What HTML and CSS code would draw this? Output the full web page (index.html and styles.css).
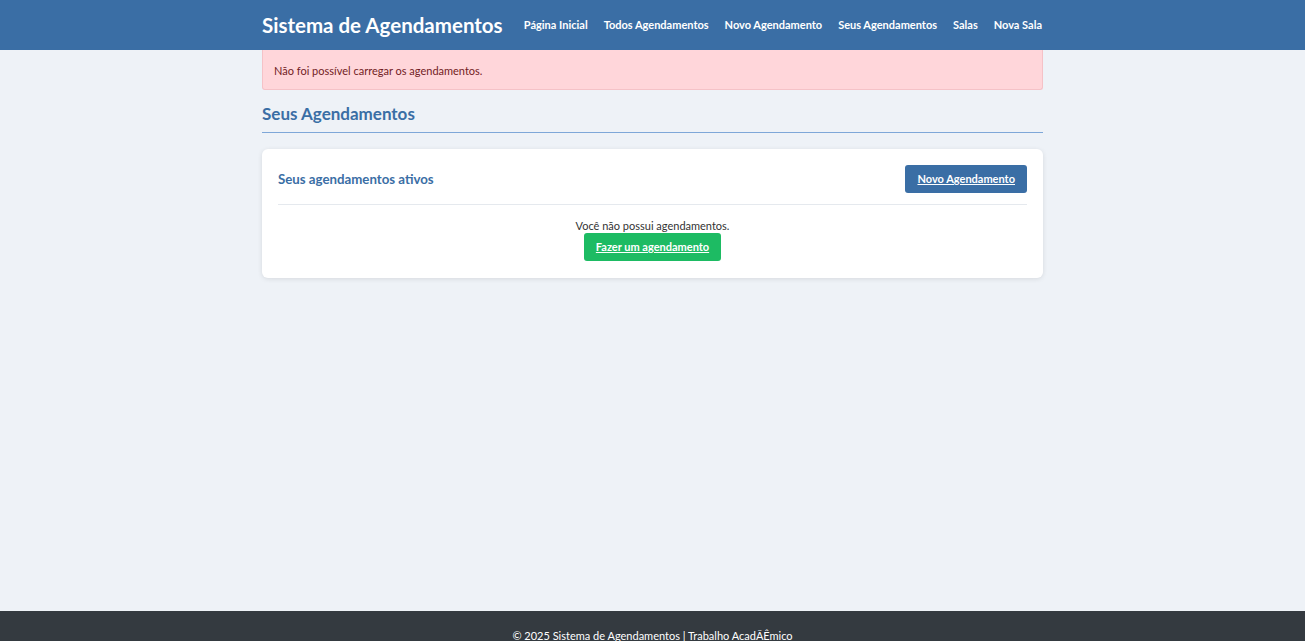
FILE: index.html
```html
<!DOCTYPE html>
<html lang="pt-BR">
<head>
<meta charset="utf-8">
<title>Seus Agendamentos</title>
<link rel="stylesheet" href="styles.css">
</head>
<body>
<header class="topbar">
  <div class="container topbar-inner">
    <a class="brand" href="#">Sistema de Agendamentos</a>
    <nav class="nav">
      <a href="#">Página Inicial</a>
      <a href="#">Todos Agendamentos</a>
      <a href="#">Novo Agendamento</a>
      <a href="#">Seus Agendamentos</a>
      <a href="#">Salas</a>
      <a href="#">Nova Sala</a>
    </nav>
  </div>
</header>
<main class="main">
  <div class="container">
    <div class="alert">Não foi possível carregar os agendamentos.</div>
    <h2 class="page-title">Seus Agendamentos</h2>
    <section class="card">
      <div class="card-header">
        <h3 class="card-title">Seus agendamentos ativos</h3>
        <a class="btn btn-primary" href="#">Novo Agendamento</a>
      </div>
      <div class="card-body">
        <p class="empty">Você não possui agendamentos.</p>
        <a class="btn btn-success" href="#">Fazer um agendamento</a>
      </div>
    </section>
  </div>
</main>
<footer class="footer">
  <p>© 2025 Sistema de Agendamentos | Trabalho AcadÃÊmico</p>
</footer>
</body>
</html>
```

FILE: styles.css
```css
* { box-sizing: border-box; }
html, body { margin: 0; padding: 0; }
body {
  font-family: Lato, "Open Sans", sans-serif;
  background: #eef2f7;
  color: #333;
  font-size: 12px;
}
.container {
  width: 781px;
  margin: 0 auto;
}
.topbar {
  background: #3a6ea5;
  height: 50px;
}
.topbar-inner {
  height: 50px;
  display: flex;
  align-items: center;
  justify-content: space-between;
  white-space: nowrap;
}
.brand {
  color: #fff;
  text-decoration: none;
  font-weight: 700;
  font-size: 20.5px;
}
.nav {
  display: flex;
  gap: 16px;
  padding-right: 1px;
  margin-top: -2px;
}
.nav a {
  color: #fff;
  text-decoration: none;
  font-size: 11px;
  font-weight: 700;
}
.main {
  min-height: calc(100vh - 80px);
}
.alert {
  background: #ffd6da;
  border: 1px solid #f5c2c7;
  border-top: none;
  border-radius: 0 0 3px 3px;
  color: #721c24;
  height: 40px;
  padding: 1px 11px 0;
  display: flex;
  align-items: center;
  font-size: 11px;
}
.page-title {
  margin: 13px 0 16px;
  padding-bottom: 8px;
  border-bottom: 1px solid #7ea7d8;
  color: #3a6ea5;
  font-size: 17px;
  font-weight: 700;
}
.card {
  background: #fff;
  border-radius: 6px;
  box-shadow: 0 1px 5px rgba(0,0,0,0.1);
  padding: 16px 16px 17px;
}
.card-header {
  display: flex;
  justify-content: space-between;
  align-items: center;
  padding-bottom: 11px;
  border-bottom: 1px solid #e5e9ee;
}
.card-title {
  margin: 0;
  color: #3a6ea5;
  font-size: 13.25px;
  font-weight: 700;
}
.btn {
  display: inline-block;
  color: #fff;
  text-decoration: underline;
  font-weight: 700;
  font-size: 11px;
  padding: 0 12px;
  height: 28px;
  line-height: 28px;
  border-radius: 3px;
}
.btn-primary { background: #3a6ea5; }
.btn-success { background: #1dbb63; }
.card-body {
  padding-top: 13px;
  text-align: center;
}
.empty {
  margin: 0;
  font-size: 11px;
  line-height: 15px;
  color: #333;
}
.footer {
  background: #343a40;
  color: #fff;
  text-align: center;
  padding: 18px 0 12px;
}
.footer p { margin: 0; font-size: 11px; }
```
